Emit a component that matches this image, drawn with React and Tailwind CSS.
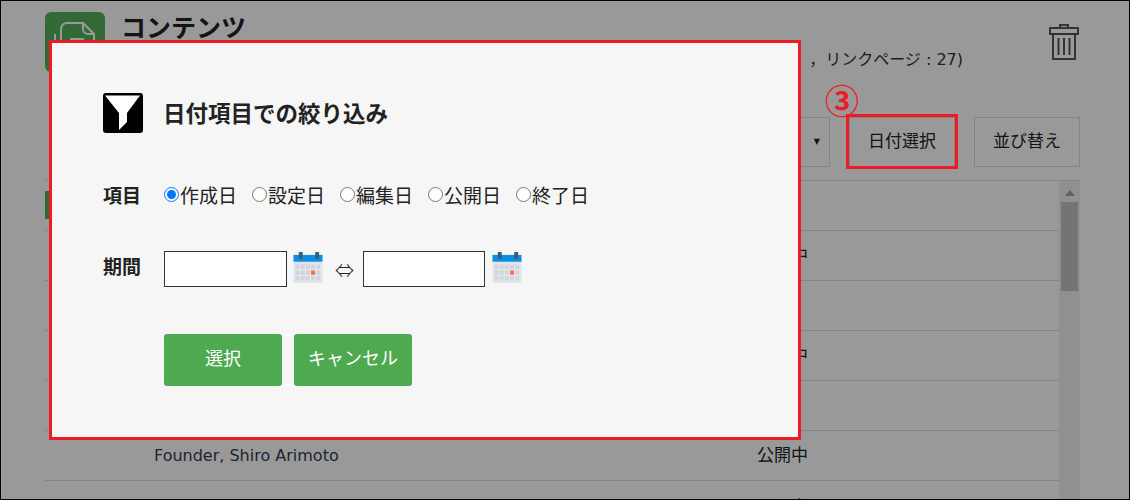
const jp = "font-['DejaVu_Sans','Noto_Sans_CJK_JP',sans-serif]";

function Calendar() {
  return (
    <svg width="30" height="31" viewBox="0 0 31 32" className="shrink-0 -mt-[3px]">
      <rect x="0.5" y="3" width="30" height="29" fill="#e3e5e8" />
      <rect x="0.5" y="3" width="30" height="7" fill="#0a8fe6" />
      <rect x="6" y="0" width="4" height="7" fill="#44596b" />
      <rect x="23" y="0" width="4" height="7" fill="#44596b" />
      {[0, 1, 2, 3, 4].map((c) =>
        [0, 1, 2].map((r) => (
          <rect
            key={c + "-" + r}
            x={2.5 + c * 5.4}
            y={13 + r * 6}
            width="4"
            height="4.5"
            fill={c === 3 && r === 1 ? "#ff6b4f" : "#cfd6e0"}
          />
        ))
      )}
    </svg>
  );
}

function Radio({ label, checked }) {
  return (
    <label className="flex items-center">
      <input type="radio" name="item" defaultChecked={checked} className="m-0 w-[15px] h-[15px] accent-[#0075ff] -mt-[3px] mr-[1px]" />
      <span>{label}</span>
    </label>
  );
}

function Row({ title, status, last }) {
  return (
    <div className={last ? "h-[50px] pt-[4px] border-b border-[#ddd] flex items-center" : "h-[50px] border-b border-[#ddd] flex items-center"}>
      <span className="ml-[109px] w-[603px] text-[16px] text-[#333d55]">{title}</span>
      <span className="text-[17px] text-[#222]">{status}</span>
    </div>
  );
}

export default function App() {
  return (
    <div className={"relative w-[1130px] h-[500px] overflow-hidden bg-white border border-black " + jp}>
      <div className="pl-[44px] pr-[49px] pt-[11px]">
        <div className="flex h-[60px]">
          <div className="w-[60px] h-[60px] rounded-md bg-[#55b05a] shrink-0">
            <svg width="60" height="60" viewBox="0 0 60 60" fill="none" stroke="#fff" strokeWidth="2">
              <path d="M38 11H22a6 6 0 0 0-6 6v35h33V22z" />
              <path d="M38 11v6a5 5 0 0 0 5 5h6" />
              <path d="M10 22v30" />
              <path d="M25 27h14" />
            </svg>
          </div>
          <div className="ml-[16px] flex-1">
            <div className="text-[25px] font-bold leading-[34px] text-[#222]">コンテンツ</div>
            <div className="text-[16px] leading-[22px] mt-[3px] text-[#333] text-right pr-[86px]">，リンクページ : 27)</div>
          </div>
          <svg width="30" height="36" viewBox="0 0 30 36" fill="none" stroke="#555" strokeWidth="2" className="mt-[12px] shrink-0 mr-[1px]">
            <rect x="1" y="4" width="28" height="6" />
            <rect x="11" y="1" width="8" height="3" />
            <path d="M4 10v25h22V10" />
            <path d="M9.5 14v17M15 14v17M20.5 14v17" />
          </svg>
        </div>
        <div className="flex justify-end mt-[45px] h-[50px]">
          <div className="w-[120px] h-[50px] border border-[#ddd] flex items-center justify-end pr-[9px] text-[8px] text-[#222]">▼</div>
          <div className="ml-[19px] w-[106px] h-[50px] border border-[#ddd] flex items-center justify-center text-[17px] text-[#222]">日付選択</div>
          <div className="ml-[19px] w-[106px] h-[50px] border border-[#ddd] flex items-center justify-center text-[17px] text-[#222]">並び替え</div>
        </div>
        <div className="mt-[13px] border-t border-[#ddd] flex">
          <div className="flex-1 relative">
            <div className="absolute left-0 top-[10px] w-[6px] h-[28px] bg-[#55b05a]" />
            <Row title="" status="" />
            <Row title="" status="公開中" />
            <Row title="" status="" />
            <Row title="" status="公開中" />
            <Row title="" status="" />
            <Row title="Founder, Shiro Arimoto" status="公開中" />
            <Row title="" status="公開中" last />
          </div>
          <div className="w-[21px] bg-[#f1f1f1] flex flex-col items-center">
            <svg width="10" height="6" viewBox="0 0 10 6" className="mt-[9px]"><path d="M5 0l5 6H0z" fill="#a3a3a3" /></svg>
            <div className="w-[17px] h-[89px] bg-[#c1c1c1] mt-[6px]" />
          </div>
        </div>
      </div>

      <div className="absolute inset-0 bg-black/40" />

      <div className="absolute left-[48px] top-[39px] w-[752px] h-[400px] border-[3px] border-[#ed1c24] bg-[#f6f6f6] pl-[51px] pt-[50px] text-[#222]">
        <div className="flex items-center h-[40px]">
          <div className="w-[40px] h-[40px] bg-black rounded-[3px] shrink-0">
            <svg width="40" height="40" viewBox="0 0 40 40"><path d="M2 2.5h35L24 20v9l-8 8V20z" fill="#fff" /></svg>
          </div>
          <div className="ml-[20px] pt-[3px] text-[22.5px] font-bold">日付項目での絞り込み</div>
        </div>
        <div className="flex items-center mt-[48px] h-[30px] text-[19px]">
          <div className="w-[61px] font-bold">項目</div>
          <div className="flex gap-[15px]">
            <Radio label="作成日" checked />
            <Radio label="設定日" />
            <Radio label="編集日" />
            <Radio label="公開日" />
            <Radio label="終了日" />
          </div>
        </div>
        <div className="flex items-center mt-[40px] h-[36px]">
          <div className="w-[61px] font-bold text-[19px] pb-[3px]">期間</div>
          <input className="w-[123px] h-[36px] bg-white border border-[#333]" />
          <div className="ml-[6px] flex"><Calendar /></div>
          <span className="ml-[12px] w-[28px] font-['Noto_Sans_CJK_JP',sans-serif] font-light text-[19px] leading-none">⇔</span>
          <input className="w-[122px] h-[36px] bg-white border border-[#333]" />
          <div className="ml-[7px] flex"><Calendar /></div>
        </div>
        <div className="flex mt-[47px] ml-[61px] gap-[12px]">
          <button className="w-[118px] h-[52px] pb-[3px] rounded-[3px] bg-[#4fa951] text-white text-[18px]">選択</button>
          <button className="w-[118px] h-[52px] pb-[3px] rounded-[3px] bg-[#4fa951] text-white text-[18px]">キャンセル</button>
        </div>
      </div>

      <div className="absolute left-[824px] top-[79px] font-['Noto_Sans_CJK_JP',sans-serif] text-[34px] leading-[40px] font-bold text-[#ed1c24]">③</div>
      <div className="absolute left-[845px] top-[113px] w-[112px] h-[55px] border-[3px] border-[#ed1c24]" />
    </div>
  );
}
